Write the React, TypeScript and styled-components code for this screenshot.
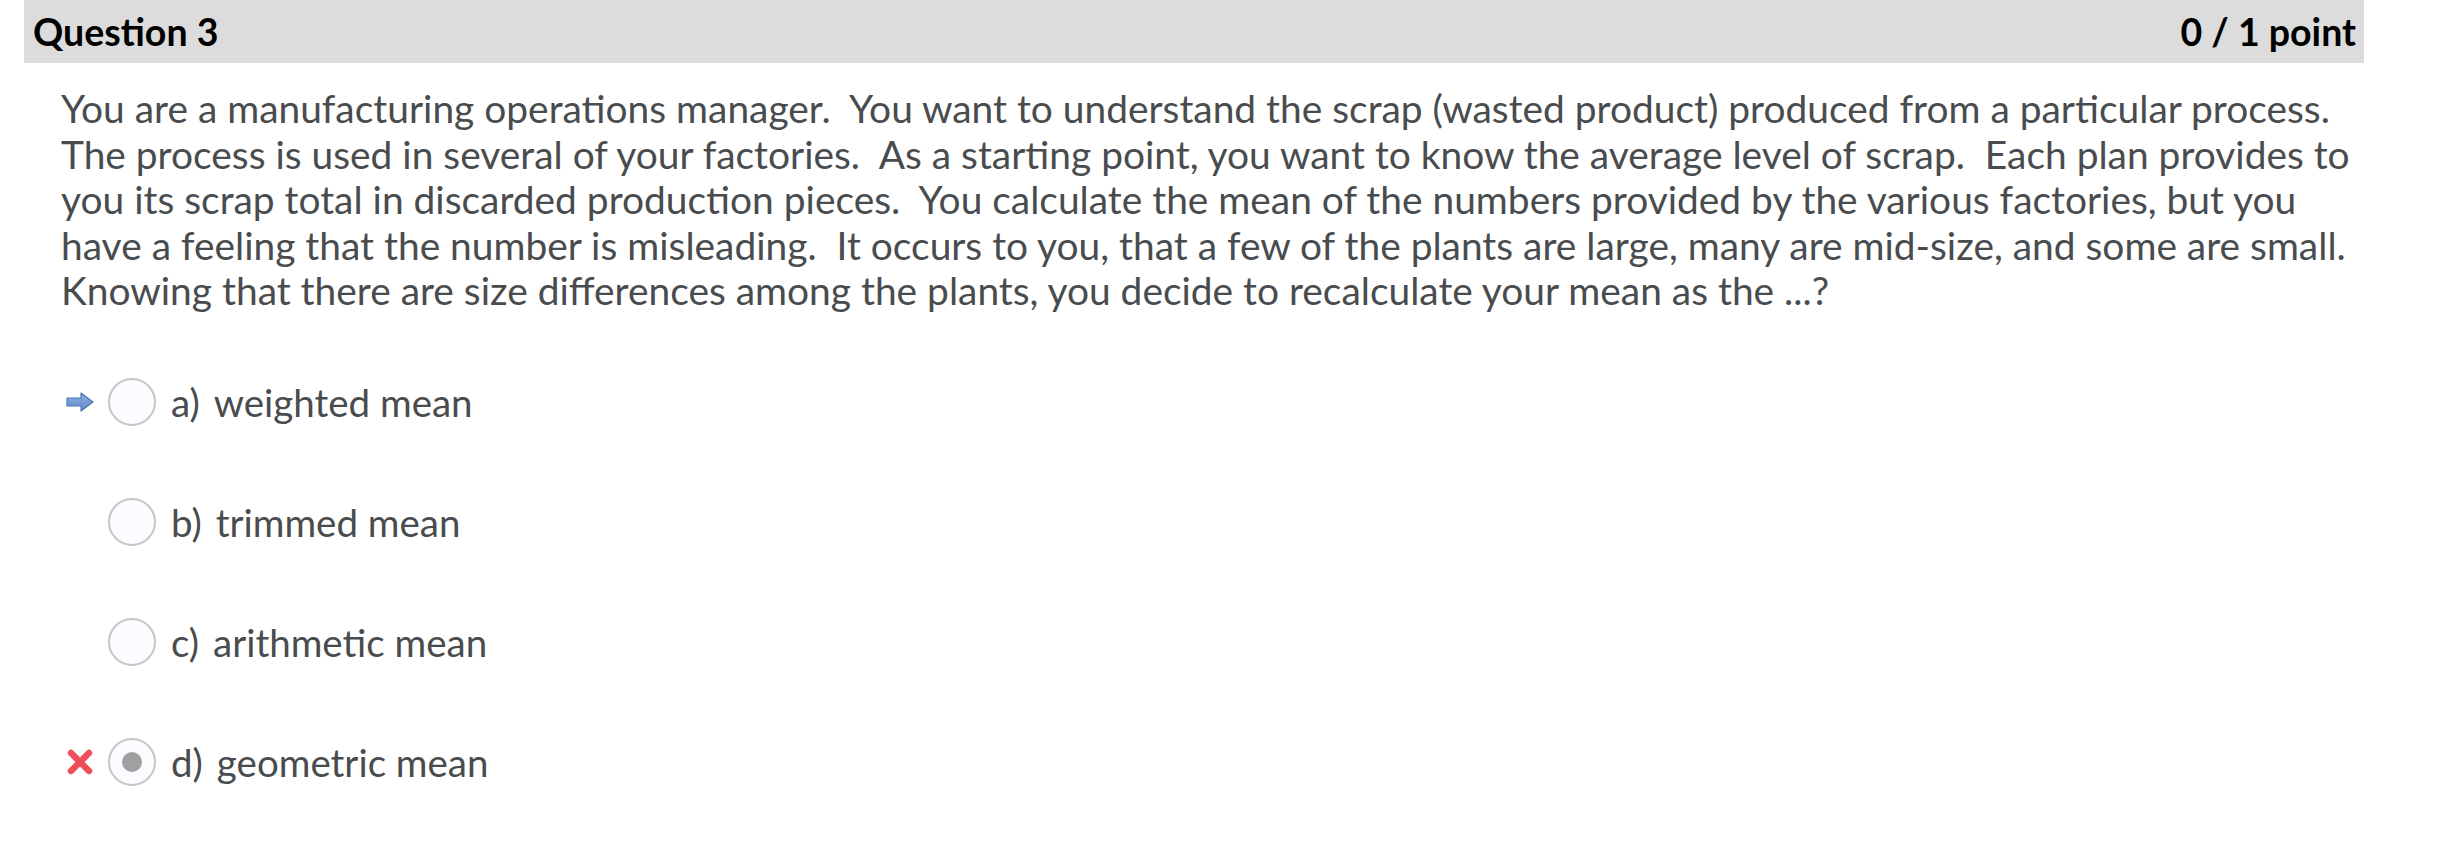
import React from "react";
import styled, { createGlobalStyle } from "styled-components";

const Global = createGlobalStyle`
  html, body { margin: 0; padding: 0; background: #ffffff; }
  body { font-family: Lato, "Open Sans", "Liberation Sans", sans-serif; }
`;

const Page = styled.div`
  padding-left: 24px;
  width: 2340px;
`;

const Header = styled.div`
  display: flex;
  justify-content: space-between;
  align-items: center;
  height: 63px;
  background: #dcdcdc;
  padding: 0 8px 0 9px;
  font-size: 37.5px;
  font-weight: 700;
  color: #000000;
  line-height: 63px;
`;

const Body = styled.div`
  padding: 23px 0 0 37px;
`;

const Prompt = styled.p`
  margin: 0;
  font-size: 38.9px;
  line-height: 45.5px;
  color: #494c4e;
`;

const Options = styled.div`
  display: flex;
  flex-direction: column;
  margin-top: 28px;
  padding-left: 5px;
`;

const Row = styled.div`
  display: flex;
  align-items: center;
  height: 120px;
`;

const Mark = styled.span`
  width: 28px;
  height: 26px;
  display: flex;
  align-items: center;
  justify-content: center;
  margin-right: 14px;
`;

const Radio = styled.span<{ $checked?: boolean }>`
  box-sizing: border-box;
  width: 48px;
  height: 48px;
  border-radius: 50%;
  border: 2px solid #c6c6c6;
  background: #fafcff;
  display: flex;
  align-items: center;
  justify-content: center;
  margin-right: 15px;
  &::after {
    content: "";
    display: ${(p) => (p.$checked ? "block" : "none")};
    width: 20px;
    height: 20px;
    border-radius: 50%;
    background: #a0a0a0;
  }
`;

const OptionText = styled.span`
  font-size: 38.5px;
  color: #494c4e;
  white-space: nowrap;
`;

const Letter = styled.span`
  display: inline-block;
  margin-right: 14px;
`;

const Arrow = () => (
  <svg width="28" height="20" viewBox="0 0 28 20">
    <defs>
      <linearGradient id="ag" x1="0" y1="0" x2="0" y2="1">
        <stop offset="0" stopColor="#8fb0e0" />
        <stop offset="1" stopColor="#5f88c8" />
      </linearGradient>
    </defs>
    <polygon
      points="1,6 15,6 15,1 27,10 15,19 15,14 1,14"
      fill="url(#ag)"
      stroke="#4f78b5"
      strokeWidth="1.2"
      strokeLinejoin="round"
    />
  </svg>
);

const Cross = () => (
  <svg width="26" height="26" viewBox="0 0 26 26">
    <g stroke="#ee4d5a" strokeWidth="6.5" strokeLinecap="round">
      <line x1="4" y1="4" x2="22" y2="22" />
      <line x1="22" y1="4" x2="4" y2="22" />
    </g>
  </svg>
);

const options = [
  { letter: "a)", text: "weighted mean", mark: "arrow", checked: false },
  { letter: "b)", text: "trimmed mean", mark: "", checked: false },
  { letter: "c)", text: "arithmetic mean", mark: "", checked: false },
  { letter: "d)", text: "geometric mean", mark: "cross", checked: true },
];

export default function App() {
  return (
    <>
      <Global />
      <Page>
        <Header>
          <span>Question 3</span>
          <span>0 / 1 point</span>
        </Header>
        <Body>
          <Prompt>
            You are a manufacturing operations manager.{"\u00a0 "}You want to understand the scrap
            (wasted product) produced from a particular process.{"\u00a0 "}The process is used in
            several of your factories.{"\u00a0 "}As a starting point, you want to know the average
            level of scrap.{"\u00a0 "}Each plan provides to you its scrap total in discarded
            production pieces.{"\u00a0 "}You calculate the mean of the numbers provided by the
            various factories, but you have a feeling that the number is misleading.{"\u00a0 "}It
            occurs to you, that a few of the plants are large, many are mid-size, and some are
            small.{"\u00a0 "}Knowing that there are size differences among the plants, you decide
            to recalculate your mean as the ...?
          </Prompt>
          <Options>
            {options.map((o) => (
              <Row key={o.letter}>
                <Mark>
                  {o.mark === "arrow" && <Arrow />}
                  {o.mark === "cross" && <Cross />}
                </Mark>
                <Radio $checked={o.checked} />
                <OptionText>
                  <Letter>{o.letter}</Letter>
                  {o.text}
                </OptionText>
              </Row>
            ))}
          </Options>
        </Body>
      </Page>
    </>
  );
}
